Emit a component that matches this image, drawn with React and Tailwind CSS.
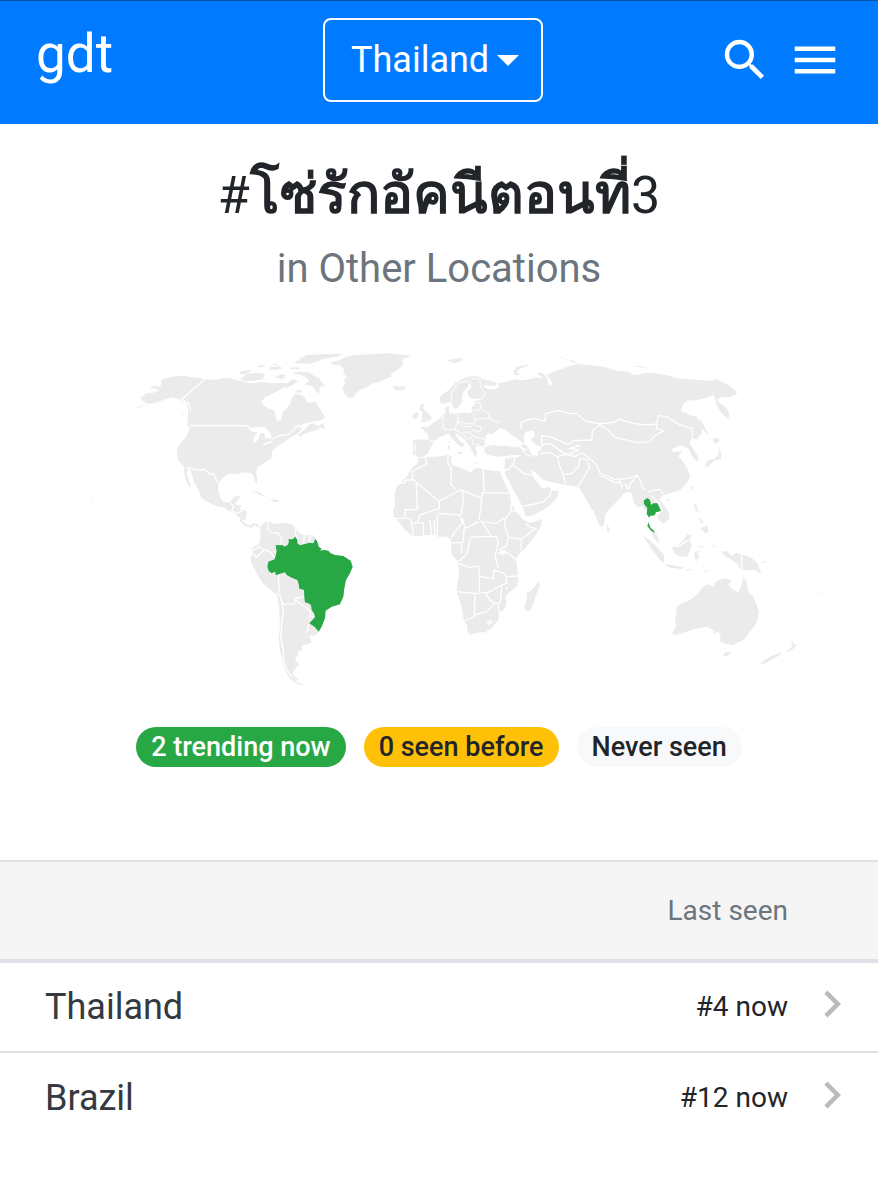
import React, { useState } from "react";
import { MdChevronRight, MdMenu, MdSearch } from "react-icons/md";

const locations = [
    { name: "Thailand", lastSeen: "#4 now" },
    { name: "Brazil", lastSeen: "#12 now" },
];

const Header = () => {
    const [location, setLocation] = useState("Thailand");

    return (
        <header className="grid grid-cols-3 items-center border-t border-[#0a4fa8] bg-[#007bff] px-9 pt-[17px] pb-[22px] text-white">
            <a href="#home" className="pb-3 text-[53px] leading-[60px]">
                gdt
            </a>
            <div className="relative mr-3 justify-self-center">
                <select
                    aria-label="Location"
                    value={location}
                    onChange={(e) => setLocation(e.target.value)}
                    className="h-[84px] w-[220px] appearance-none rounded-lg border-2 border-white bg-[#007bff] pl-[26px] text-4xl"
                >
                    {locations.map((item) => (
                        <option key={item.name}>{item.name}</option>
                    ))}
                </select>
                <svg
                    className="pointer-events-none absolute top-9 right-6 h-3 w-[22px]"
                    viewBox="0 0 22 12"
                    fill="currentColor"
                    aria-hidden="true"
                >
                    <path d="M0 1h22L11 12z" />
                </svg>
            </div>
            <div className="flex items-center gap-4 justify-self-end">
                <button aria-label="Search">
                    <MdSearch className="size-[54px]" />
                </button>
                <button aria-label="Menu">
                    <MdMenu className="size-[54px]" />
                </button>
            </div>
        </header>
    );
};

const WorldMap = () => (
    <svg className="w-full" viewBox="0 0 2634 1080" role="img" aria-label="World map of trending locations">
        <g fill="#ebebeb" stroke="none">
            {/* North America */}
            <g transform="translate(240 0)">
                <path d="M245 118L275 110 310 107 340 112 375 117 400 120 430 114 455 116 490 125 515 130 545 125 575 130 600 128 625 130 615 140 595 152 575 162 555 172 543 185 550 196 565 205 583 210 587 232 592 243 603 240 608 215 620 205 632 190 635 175 645 162 662 164 675 172 680 185 695 190 705 182 715 200 725 215 735 232 725 240 700 245 680 248 662 256 652 266 668 262 655 280 640 288 622 297 612 308 598 315 585 325 577 333 575 355 550 370 535 380 528 395 532 415 530 432 525 425 520 405 510 400 490 397 470 402 445 402 425 415 415 435 415 455 422 475 432 487 450 487 462 470 480 467 475 480 465 490 470 495 485 496 478 512 500 515 497 540 485 540 465 520 445 512 432 502 415 500 390 490 365 475 360 460 350 440 340 420 333 395 325 386 320 400 326 418 332 442 325 437 316 415 312 395 312 380 295 362 291 345 293 325 305 305 318 290 327 272 330 262 325 250 322 235 325 210 318 190 300 180 280 172 255 178 235 186 205 192 190 185 180 175 200 160 220 158 240 150 212 143 215 138 242 140Z" />
                <path d="M675 268L685 255 700 250 712 258 735 248 730 256 740 270 722 262 710 270 690 276 672 282 658 290 655 284Z" />
                <path d="M205 193L180 201 155 210 178 199ZM318 245l8 8 5 14-6-5zM517 452l18 3 23 17-13-4zM573 478l22 2 3 5-18 2zM33 473l5 4-5 3zM305 220l4 0 2 8z" />
                <g fill="#fff">
                    <path d="M505 268L530 260 555 262 565 272 575 285 572 297 555 293 552 278 540 280 535 298 520 312 522 290 532 277 518 275Z" />
                    <path d="M548 312l27-10 4 4-26 10z" />
                </g>
            </g>
            {/* Arctic islands, Greenland and Iceland */}
            <g transform="translate(720 0)">
                <path d="M0 118L20 102 45 98 75 102 68 118 40 122 15 124ZM0 95l25-6 10 5-18 8-17 1zM155 98l25-3 28 2 14 11 15 6 8 12 10 12-15 2-2 10 6 10-15-4-10-15-12-6-15-2 14-6 0-8-10-8-16-8-20-2zM105 112l20-10 15 4-14 12zM130 142l12-12 16-13 16 6-10 8-22 12zM165 152l18-3 4 8-16 2zM48 80l18-6 10 5-12 3zM90 82l25-3 15 6-22 4-20 0zM95 74l12-4 5 6zM178 56l10-5 10 4-14 5zM150 84l10-3 24 2-8 5-26-1zM160 70l40-25 50-3 60 0-20 8-40 6-20 9-25 7-25-2z" />
                <path d="M270 68L300 60 320 50 345 45 400 42 450 40 512 47 485 60 490 75 475 88 465 92 460 97 450 105 458 108 440 115 420 125 400 130 380 142 360 150 348 160 338 174 325 172 312 160 308 145 315 130 312 118 322 112 310 100 312 88 300 76 280 74Z" />
                <path d="M458 142l12-5 8 3 17-2 0 10-17 4-16-4z" />
            </g>
            {/* South America */}
            <g transform="translate(720 510)">
                <path d="M62 50L72 38 85 33 95 40 115 42 135 38 155 42 165 52 172 62 180 72 200 75 220 76 228 88 235 100 240 118 262 122 285 135 310 138 332 152 338 170 330 190 318 210 313 235 310 260 300 283 275 290 257 302 255 325 245 350 236 365 230 374 215 377 207 374 212 385 214 398 200 404 187 405 185 420 172 425 175 435 165 445 170 455 177 462 165 478 158 490 166 502 180 512 160 508 178 520 200 527 180 526 160 515 145 500 135 480 128 455 120 425 116 390 120 350 118 300 112 255 85 235 65 215 50 190 33 155 32 145 38 130 35 115 45 108 58 100 62 85 60 65Z" />
                <path d="M0 0L16 0 20 12 15 25 4 20 0 12ZM0 24L8 32 20 44 32 46 42 38 55 44 62 55 52 50 42 46 34 54 15 48 0 34Z" />
                <g fill="none" stroke="#fff" strokeWidth="4">
                    <path d="M85 34L82 55 95 68 115 70 125 85 122 105M38 122L55 110 75 120 90 125 103 142M38 132L50 142 72 120M118 193L115 215 118 240 113 252M118 250L125 275 135 285 145 280 162 283 167 265 190 260M165 267L175 278 195 290 212 305 208 320 225 318M125 275L130 300 125 340 122 380 130 420 130 450 140 480 158 502M168 55L166 72 174 88M194 70L190 100M212 72L208 98M205 342L202 368" />
                </g>
            </g>
            {/* Europe */}
            <g transform="translate(1140 30)">
                <path d="M180 155L180 140 195 128 210 118 225 98 245 88 265 80 290 78 310 88 330 92 350 98 350 106 330 108 315 104 310 112 315 130 303 145 280 148 265 138 262 125 275 110 270 98 262 112 248 130 245 145 248 155 238 168 228 178 220 172 212 155 200 158 188 162Z" />
                <path d="M308 110L325 118 345 118 370 106 410 94 450 88 480 92 480 230 455 242 440 250 440 280 425 278 405 268 385 258 375 250 372 240 360 240 350 245 340 255 325 248 318 258 320 275 310 290 295 286 285 292 292 310 285 322 275 300 270 290 262 280 250 265 235 255 225 250 235 268 255 284 245 292 230 280 215 265 205 250 190 258 175 262 165 272 160 280 150 295 145 310 130 320 115 322 105 315 98 315 100 295 98 272 120 268 145 270 145 255 130 240 120 232 145 230 165 215 185 200 195 190 197 172 207 168 208 190 225 192 250 188 275 190 275 172 285 165 278 155 300 150 315 132Z" />
                <path d="M120 165l12-3-2 13 10 10 15 15-2 10-18 5-17 2 10-10-3-10 3-10-10-7zM98 195l12-10 7 8-6 12-13 3zM315 292L345 283 375 282 400 285 425 290 428 315 400 315 375 318 350 320 325 315 312 305ZM200 30l25-3 25-2-8 8-18 7-14-4zM205 285l5 0 0 14-5 0zM228 306l18-1-3 9zM280 336l18 2-1 3-16-2zM206 272l3 0 0 9-3 0z" />
                <g fill="none" stroke="#fff" strokeWidth="3">
                    <path d="M213 155L215 130 232 100 262 92 272 100M275 88L288 84 300 90 302 110 316 130 305 148M278 158L300 158 305 178 328 192 328 205 285 208 280 190M300 180L278 180M285 208L283 225 305 232 300 245 275 240M328 205L350 215 378 222 378 240M235 192L232 212 255 220 280 222M190 198L188 220 192 238 205 240 225 238 232 215M232 215L250 230 275 230M145 270L170 275M105 280L108 312M225 238L245 250 265 245 285 262 318 268M250 252L260 268 275 262 280 285 300 280M425 290L420 268M425 210L460 205 480 208M425 210L425 235M425 210L440 210" />
                </g>
            </g>
            {/* Africa and Arabia */}
            <g transform="translate(1140 300)">
                <path d="M113 55L140 52 170 50 205 45 215 50 213 62 217 75 235 80 260 92 275 97 282 86 295 84 310 88 345 93 360 93 365 110 380 140 390 165 393 190 405 210 425 225 435 240 445 248 465 245 487 237 480 265 460 295 435 325 415 345 408 360 412 385 415 420 410 440 390 455 375 470 380 490 375 505 358 520 355 540 335 565 315 577 290 578 270 585 262 575 262 560 250 535 245 500 230 455 232 430 238 405 235 380 232 362 215 345 213 330 215 310 210 295 195 290 175 290 165 285 140 285 120 288 95 287 75 270 60 250 45 235 38 215 45 195 43 165 50 140 65 125 80 110 95 85 113 70Z" />
                <path d="M475 422L480 435 470 460 460 490 450 513 437 513 433 500 440 480 440 460 455 450 468 435Z" />
                <path d="M375 52L400 48 430 45 445 40 460 60 458 90 455 105 470 125 488 146 505 140 515 150 537 155 530 175 510 195 490 210 460 225 437 230 430 205 415 175 400 150 385 120 375 105 374 75Z" />
                <circle cx="368" cy="337" r="8" fill="#fff" />
                <g fill="none" stroke="#fff" strokeWidth="4">
                    <path d="M55 130L75 128 77 120 98 120 98 100M92 97L140 72 135 50M100 120L177 184M109 130L112 208 75 210M177 184L240 150M204 48L203 68 213 82 213 130 225 148M213 130L213 138M240 150L250 152 305 175M310 88L312 158 308 158 305 175M312 158L390 160M305 175L302 205 297 240M248 152L250 180 243 225M178 184L178 205 150 215 120 225 113 245M175 220L240 225M172 222L172 288M240 225L247 250 225 275 215 292M247 235L255 265 297 245M252 265L250 305M303 242L335 290 352 290M305 245L350 250 370 235 375 240M395 190L392 215 375 240 375 262 385 292 425 297M392 212L410 215 435 240M437 250L450 262 467 265 425 297 423 332M385 295L378 320 355 330M350 290L355 310 345 345 355 385M352 340L378 335 408 358M270 295L262 340 240 362 232 362M215 308L245 308 245 340M272 292L310 290 350 290M235 370L265 382 295 378 300 410 340 415 342 390 370 400 382 410 414 408M298 412L298 455M230 455L285 460 325 457 365 435 380 430 378 410M285 460L283 530 258 540M285 525L320 515 345 490 358 490M318 460L330 480 345 490M365 437L362 480 355 495 358 525M95 250L100 286M130 248L130 286M150 240L155 286M162 240L165 286M40 235L60 235 90 235 95 250 130 248M75 210L75 230M380 440L380 450" />
                    <path d="M322 548L330 541 336 546 328 553Z" />
                    <path d="M374 90L385 88 400 72 406 48M400 75L430 100 455 105M432 198L465 192 490 185 510 165 515 150M430 45L445 80 458 95M372 55L430 46" />
                </g>
            </g>
            {/* Asia */}
            <g transform="translate(1500 30)">
                <path d="M-5 100L20 95 45 88 70 92 100 85 115 82 130 85 110 68 125 68 140 80 147 108 158 100 148 85 140 75 160 65 190 55 230 42 270 45 310 50 350 62 385 65 400 75 450 68 500 75 530 85 570 88 620 92 650 88 690 108 712 130 690 142 665 142 650 150 675 170 688 190 685 208 665 190 650 165 645 145 640 135 615 145 590 150 560 152 548 165 543 182 570 195 590 200 605 225 605 250 590 268 576 265 568 280 582 300 597 325 590 335 575 318 565 295 550 290 540 285 530 290 515 298 520 305 548 305 535 318 545 330 565 360 570 380 560 400 540 420 510 430 490 435 480 445 460 440 450 480 425 470 405 450 400 430 385 425 370 430 355 440 330 455 315 480 275 480 265 460 245 425 235 410 200 405 170 400 150 395 130 390 105 365 85 355 75 345 60 320 60 300 58 285 0 240Z" />
                <path fill="#fff" d="M78 245L100 242 105 258 92 268 108 285 125 290 122 300 112 305 115 318 95 315 88 300 75 280 70 262ZM575 270l-8 5 8 8z" />
                <path fill="#fff" d="M0 234L18 240 40 258 58 270 68 280 52 292 20 288-30 285-50 278-35 262Z" />
                <path d="M40 65l10-15 38-7-6 5-22 7-10 13 12 6-17 2zM172 20l16 3 22 8-18-4zM205 28l20 6 10 5-20-4zM400 48l28 1 20 4-30-1zM598 205l8 10 9 20 12 20-8-5-20-25zM640 262l22 8-16 12-6-8zM655 288l8 20 0 18-22 6-18 20-10-4 12-18 18-4 14-14z" />
                <g fill="none" stroke="#fff" strokeWidth="4">
                    <path d="M65 238L62 222 68 215 100 205 135 213 137 190 175 182 205 190 230 190 255 212 300 222 350 215 355 207 400 220 440 225 470 222 475 197 500 200 540 225 575 235 578 265M300 226L325 240 345 262 410 278 450 275 460 260 490 243 470 235 470 222M125 288L125 258 150 260 185 275 205 285 220 272 275 270 278 240 300 224M125 285L150 280 185 305 200 315 235 300 210 295 240 285M172 320L200 312 225 320 245 308M172 320L180 350 190 375 215 370 235 350 240 325 265 330M190 375L195 400M265 335L268 355 250 385 235 410M245 308L270 325 290 345 300 370 345 388 385 385 410 375 420 390 430 415 445 425 480 418 490 432M303 378L345 398 362 398 358 390M362 395L370 428M375 400L385 420 392 400 410 378M40 275L75 282M50 288L82 300M60 285L75 310M75 312L95 320M120 310L150 308 172 320" />
                </g>
            </g>
            {/* South Asia and Oceania */}
            <g transform="translate(1710 300)">
                <path d="M30 140L45 155 60 185 75 225 92 262 102 255 105 225 120 205 150 175 165 155 185 160 190 185 205 203 215 196 228 215 245 190 235 150Z" />
                <path d="M235 165L255 152 275 155 275 170 270 180 285 200 298 220 297 238 280 252 275 245 265 240 260 225 273 213 250 195ZM235 232l2 12-2-2zM243 275l15 5 12 28-8-2-14-16zM112 252l8 18-4 8-6-6zM218 288l17 10 25 22 22 25 0 23-12-8-20-25-15-23zM283 372l22 3 35 7-5 5-35-4zM307 318l18-3 15-15 12-17 13 2-5 15 5 16-13 34-17 0-20-8-6-12zM375 335l20-3-13 8 10 15-8-3-4 14-7-16zM455 335l15-2 15 14 15-9 20 6 25 10 17 15 12 31-22-10-27 0-15-5-10-15-18-12-16-8zM572 368l15-6 2 4-15 5zM372 188l8 6 0 10 10 14-14-8zM390 265l12-4 10-5 4 20-10 4zM385 232l10 6 6 14-8-4zM362 142l4-6 2 9-5 8zM380 320l20-2 0 3-20 1zM430 315l4 0 0 8-4-1zM345 388l20 0 0 3-20 0zM400 396l14-8 0 4-13 8zM290 178l10-2-2 8-6 1z" />
                <path d="M318 505L330 492 360 480 383 462 388 452 400 440 415 433 430 440 440 422 465 415 485 420 475 435 490 450 505 457 515 435 520 410 530 425 535 455 550 470 560 495 567 515 560 550 540 575 520 600 490 615 470 612 450 605 452 590 445 575 432 583 430 570 410 560 370 568 340 580 310 585 307 578 318 560 315 535 320 520Z" />
                <path d="M458 650l7-13 17-1-8 11zM570 670l30-20 35-14-5 9-30 17-20 10zM652 632l14-12-1-28 5 20 12 0-12 14-15 9zM605 370l6 2-2 3zM655 486l6 2-4 2zM742 459l8 1-6 4z" />
                <g fill="none" stroke="#fff" strokeWidth="4">
                    <path d="M515 343L515 390M245 168L255 180 270 190 275 212 262 225M310 320L330 318 345 305 362 300" />
                </g>
            </g>
            <g transform="translate(240 0)" fill="none" stroke="#fff" strokeWidth="4">
                <path d="M375 117L305 178 325 190 332 212M330 257L500 257 512 265M575 297L600 286 625 284 645 265 660 250M318 382L350 390 375 388 388 402 400 402 412 425 418 430M450 490L462 498 455 512 470 520 490 512M320 192L328 190" />
            </g>
        </g>
        <g fill="#28a745">
            <path
                transform="translate(720 510)"
                d="M107 105L118 106 128 105 133 110 143 105 147 95 145 88 158 88 166 80 172 90 172 100 180 106 195 102 208 98 220 100 226 86 232 95 236 110 245 116 240 122 252 120 265 122 272 130 285 135 310 138 332 152 338 170 330 190 318 210 313 235 310 260 300 283 275 290 257 302 255 325 245 350 236 365 225 352 208 340 225 322 222 310 215 300 213 285 205 280 195 277 193 262 192 240 178 236 176 222 172 210 155 203 140 195 135 187 118 192 108 196 105 185 95 190 86 183 82 170 85 155 104 148 110 125Z"
            />
            <path
                transform="translate(1710 300)"
                d="M221 182L232 174 240 180 243 195 250 190 262 190 268 202 273 213 258 217 254 226 240 228 238 233 230 222 232 205 222 192ZM235 247L232 258 243 272 255 279 252 272 242 264Z"
            />
        </g>
    </svg>
);

const LocationTable = () => (
    <table className="mt-[93px] w-full border-collapse">
        <thead>
            <tr className="h-[100px] border-t-2 border-b-4 border-[#dee2e6] bg-[#f5f5f5]">
                <th aria-label="Location"></th>
                <th className="text-right text-[28px] font-normal text-[#6c757d]">Last seen</th>
                <th aria-label="Details" className="w-[90px]"></th>
            </tr>
        </thead>
        <tbody>
            {locations.map((item) => (
                <tr key={item.name} className="h-[91px] border-b-2 border-[#dee2e6] last:border-b-0">
                    <td className="pl-[45px] text-4xl text-[#343a40]">{item.name}</td>
                    <td className="text-right text-[28px]">{item.lastSeen}</td>
                    <td className="pl-[17px]">
                        <a href={"#" + item.name} aria-label={item.name} className="block pb-1.5">
                            <MdChevronRight className="size-[54px] text-[#bbbbbb]" />
                        </a>
                    </td>
                </tr>
            ))}
        </tbody>
    </table>
);

const App = () => {
    return (
        <div className="min-h-screen bg-white font-[Roboto,sans-serif] text-[#212529]">
            <Header />
            <main>
                <h1 className="mt-[38px] text-center text-[52px] leading-[68px]">
                    #<b className="text-[55px] leading-none">โซ่รักอัคนีตอนที่</b>3
                </h1>
                <h2 className="mt-[15px] mb-[47px] text-center text-[40px] leading-12 text-[#6c757d]">in Other Locations</h2>
                <WorldMap />
                <div className="mt-[27px] flex flex-wrap justify-center gap-[18px] text-[27px] leading-10 font-medium">
                    <span className="rounded-full bg-[#28a745] px-[15px] text-white">2 trending now</span>
                    <span className="rounded-full bg-[#ffc107] px-[15px]">0 seen before</span>
                    <span className="rounded-full bg-[#f8f9fa] px-[15px]">Never seen</span>
                </div>
                <LocationTable />
            </main>
        </div>
    );
};

export default App;
